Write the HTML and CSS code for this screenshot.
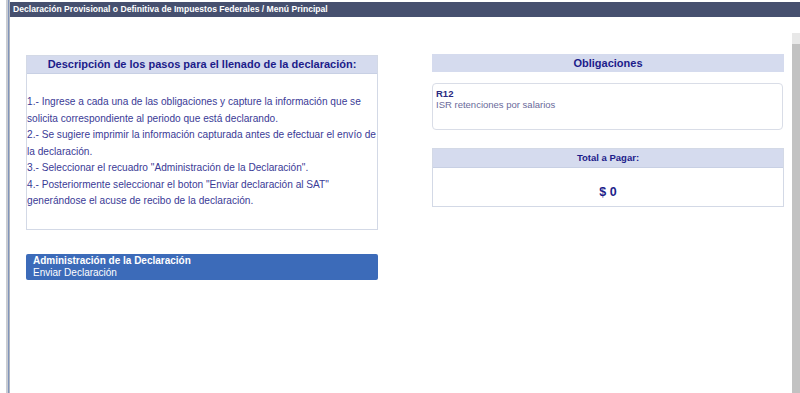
FILE: index.html
```html
<!DOCTYPE html>
<html lang="es">
<head>
  <meta charset="UTF-8">
  <title>Menú Principal</title>
  <link rel="stylesheet" href="styles.css">
</head>
<body>
  <div class="shell">
    <div class="inner">
      <div class="topbar">Declaración Provisional o Definitiva de Impuestos Federales / Menú Principal</div>
      <div class="area">
        <div class="content">
          <div class="col">
            <div class="panel steps">
              <div class="panel-head">Descripción de los pasos para el llenado de la declaración:</div>
              <div class="steps-body">
                <p>1.- Ingrese a cada una de las obligaciones y capture la información que se solicita correspondiente al periodo que está declarando.</p>
                <p>2.- Se sugiere imprimir la información capturada antes de efectuar el envío de la declaración.</p>
                <p>3.- Seleccionar el recuadro "Administración de la Declaración".</p>
                <p>4.- Posteriormente seleccionar el boton "Enviar declaración al SAT" generándose el acuse de recibo de la declaración.</p>
              </div>
            </div>
            <div class="admin">
              <div class="admin-title">Administración de la Declaración</div>
              <div class="admin-link">Enviar Declaración</div>
            </div>
          </div>
          <div class="col">
            <div class="panel-head solo">Obligaciones</div>
            <div class="oblig">
              <div class="oblig-code">R12</div>
              <div class="oblig-name">ISR retenciones por salarios</div>
            </div>
            <div class="panel total">
              <div class="panel-head small">Total a Pagar:</div>
              <div class="total-value">$ 0</div>
            </div>
          </div>
        </div>
        <div class="scrollbar">
          <div class="scroll-arrow"></div>
          <div class="scroll-track"></div>
        </div>
      </div>
    </div>
  </div>
</body>
</html>
```
FILE: styles.css
```css
html, body {
  margin: 0;
  height: 100%;
  background: #fff;
  font-family: 'Liberation Sans', Arial, sans-serif;
  overflow: hidden;
}
.shell {
  height: 100%;
  margin-left: 6px;
  border-left: 2px solid #c9ccd2;
  display: flex;
}
.inner {
  flex: 1;
  display: flex;
  flex-direction: column;
  border-left: 1px solid #8094bb;
  box-shadow: inset 1px 0 0 #b4b8c0;
}
.topbar {
  margin: 2px 0 0 1px;
  height: 15px;
  line-height: 15px;
  background: #46506f;
  color: #fff;
  font-size: 8.6px;
  font-weight: bold;
  padding-left: 3px;
}
.area {
  flex: 1;
  display: flex;
}
.content {
  flex: 1;
  display: flex;
  gap: 54px;
  padding: 38px 0 0 17px;
}
.col {
  width: 352px;
  display: flex;
  flex-direction: column;
}
.panel {
  border: 1px solid #d3d9e6;
}
.panel-head {
  background: #d5dbee;
  color: #1c1c8a;
  font-size: 11px;
  font-weight: bold;
  text-align: center;
  height: 17px;
  line-height: 17px;
  border-bottom: 1px solid #c8d0e4;
}
.panel-head.solo {
  height: 18px;
  line-height: 18px;
  margin-top: -1px;
  border-bottom: 0;
}
.panel-head.small {
  font-size: 9.5px;
  height: 18px;
  line-height: 18px;
}
.steps-body {
  height: 155px;
  padding: 20px 0 0 0;
  box-sizing: border-box;
}
.steps-body p {
  margin: 0;
  font-size: 10.15px;
  line-height: 16.5px;
  color: #3a3a96;
}
.admin {
  margin-top: 24px;
  background: #3c6bb9;
  border-radius: 2px;
  color: #fff;
  padding: 1px 7px 2px;
  font-size: 10px;
  line-height: 11.5px;
}
.admin-title {
  font-weight: bold;
}
.oblig {
  margin-top: 11px;
  border: 1px solid #d9dde7;
  border-radius: 4px;
  height: 47px;
  padding: 4px 3px;
  box-sizing: border-box;
  font-size: 9.5px;
  line-height: 11px;
  width: 351px;
}
.oblig-code {
  font-weight: bold;
  color: #2a2a80;
}
.oblig-name {
  color: #6a6a9a;
}
.total {
  margin-top: 18px;
  height: 59px;
  box-sizing: border-box;
}
.total-value {
  text-align: center;
  font-size: 12.5px;
  font-weight: bold;
  color: #1e1e8a;
  padding-top: 17px;
}
.scrollbar {
  width: 8px;
  margin-left: 8px;
  margin-top: 16px;
  display: flex;
  flex-direction: column;
}
.scroll-arrow {
  height: 11px;
  background: #e8e8e8;
}
.scroll-track {
  flex: 1;
  background: #c2c2c2;
}
```
